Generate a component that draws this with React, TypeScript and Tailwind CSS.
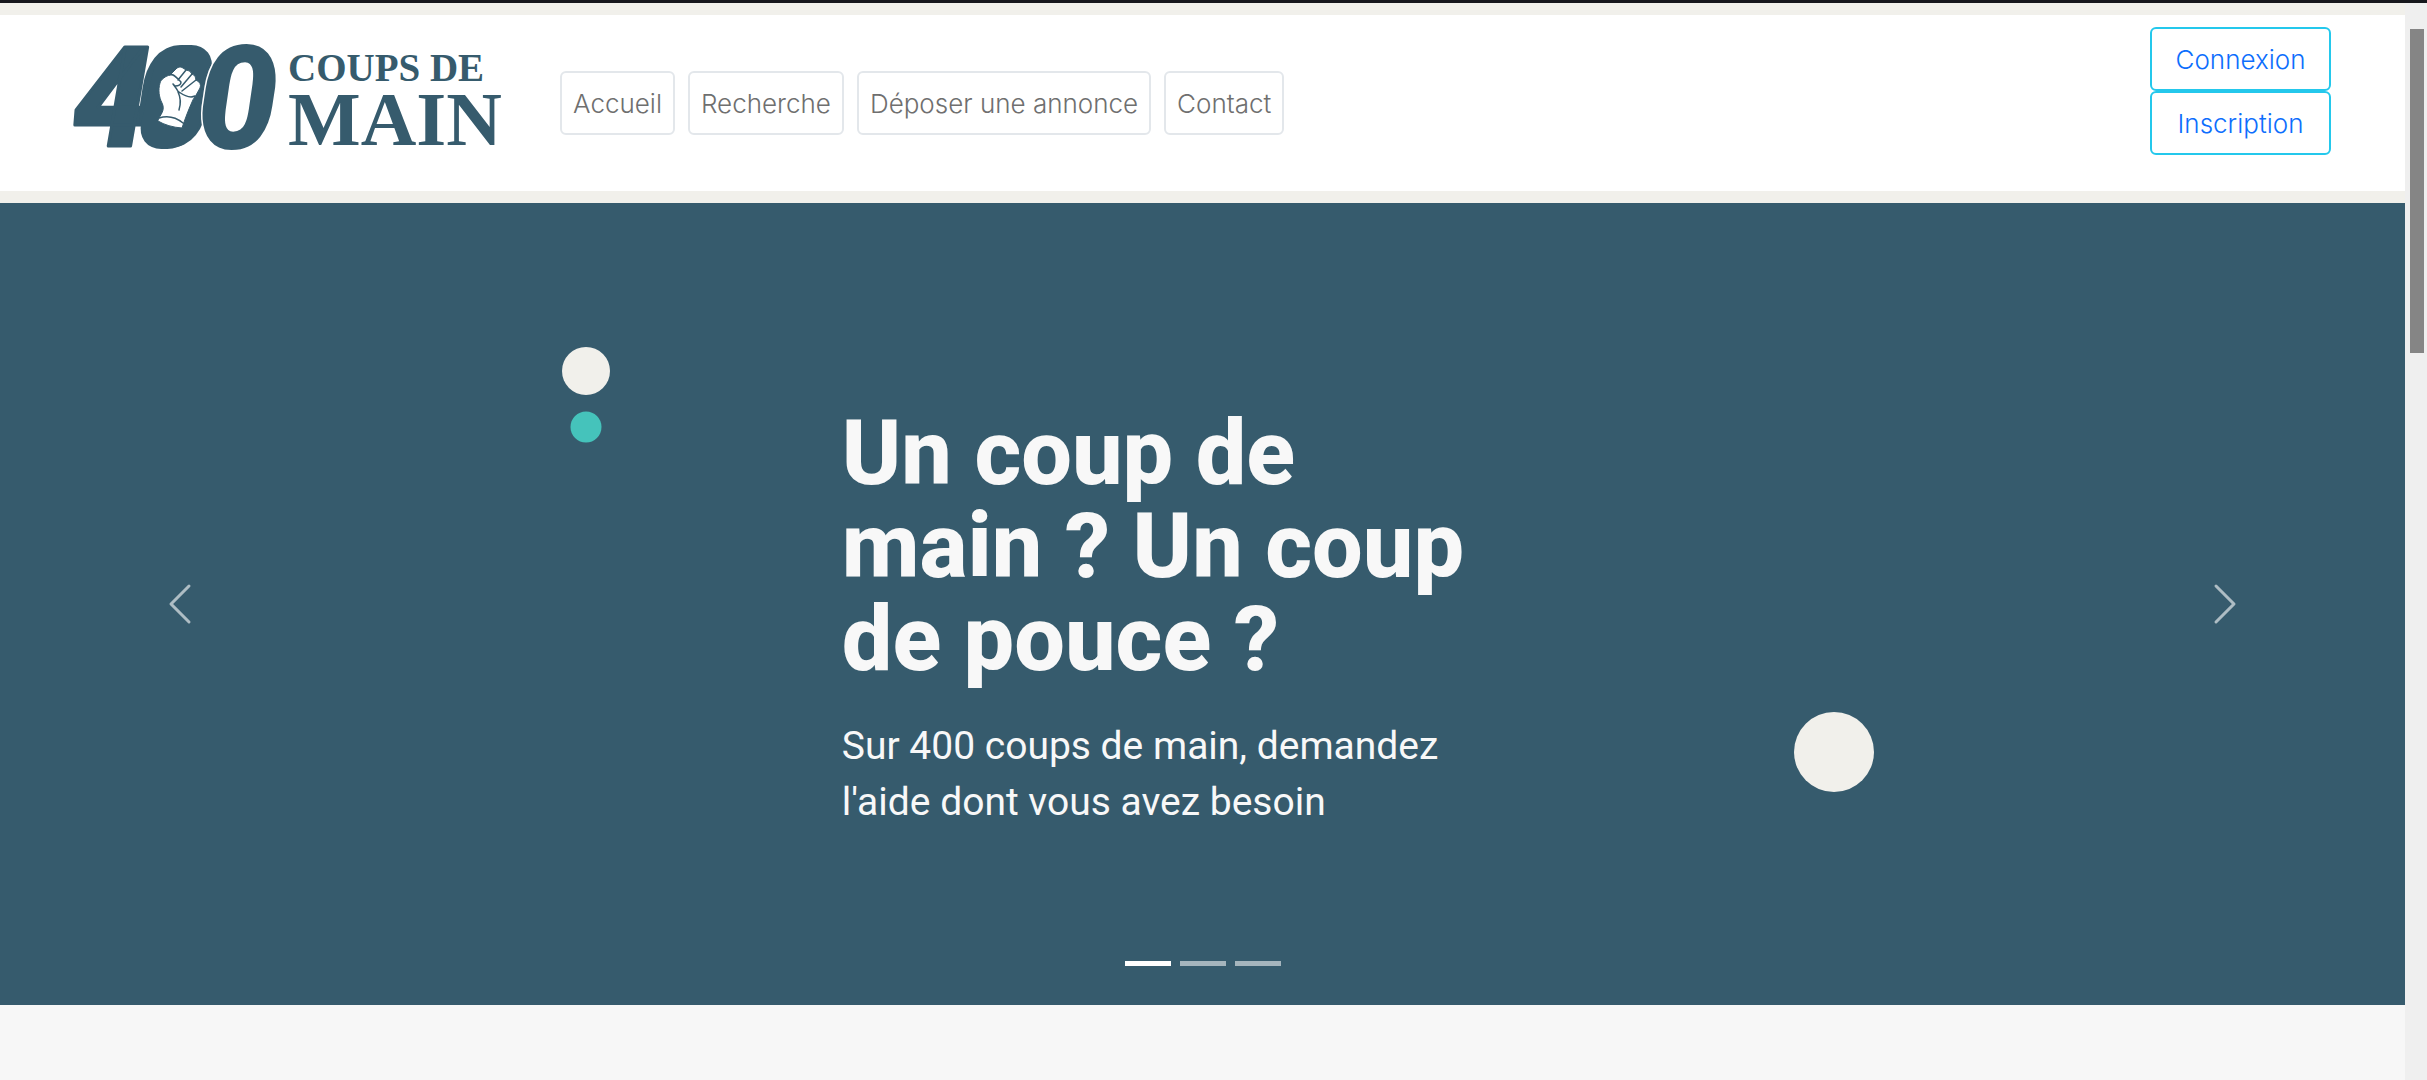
const navLinks = ["Accueil", "Recherche", "Déposer une annonce", "Contact"];
const accountLinks = ["Connexion", "Inscription"];

function Logo() {
  return (
    <svg viewBox="-14 -27 464 176" className="h-[176px] w-[464px]" role="img" aria-label="400 coups de main">
      <g fill="#365b6d" fontFamily="Roboto" fontWeight="900" fontStyle="italic">
        <text x="-1" y="104" fontSize="139" stroke="#365b6d" strokeWidth="3" strokeLinejoin="round">4</text>
        <text x="60" y="105" fontSize="141">0</text>
        <rect x="86" y="3" width="58" height="104" rx="26" transform="skewX(-13)" />
        <text x="123" y="107" fontSize="144" stroke="#ffffff" strokeWidth="3" paintOrder="stroke">0</text>
      </g>
      <g fill="#ffffff" stroke="#365b6d" strokeWidth="1" strokeLinejoin="round" strokeLinecap="round">
        <path d="M85 76 C88 71 91 67 88 61 C85 55 84 48 86 41 C87 37 92 34 96 33 L101 28 Q105 23 109 26 L112 28 Q116 28 118 32 Q122 33 122 38 Q128 41 126 46 L121 55 Q119 57 118 60 C114 69 111 77 108 86 Q94 85 84 79 Z" />
        <path d="M96 33 C99 31 103 36 107 40 Q107 44 101 44 L99 42 M99 42 Q103 47 105 51 M104 38 L112 28 M107 45 L118 32 M108 49 L122 38 M105 50 Q115 57 121 54 M104 50 Q108 58 105 68 M85 76 Q98 72 109 81" fill="none" strokeWidth="1.5" />
      </g>
      <g fill="#365b6d" fontFamily="Liberation Serif" fontWeight="700">
        <text x="214" y="39" fontSize="39">COUPS DE</text>
        <text x="214" y="103" fontSize="77">MAIN</text>
      </g>
    </svg>
  );
}

function Chevron({ path }: { path: string }) {
  return (
    <svg viewBox="0 0 16 16" className="size-12" fill="currentColor" aria-hidden="true">
      <path d={path} />
    </svg>
  );
}

function Header() {
  return (
    <header className="flex items-center border-y-[12px] border-[#f1f0eb] bg-white pr-[74px] pl-[60px]">
      <a href="#accueil" className="shrink-0">
        <Logo />
      </a>
      <nav className="ml-9 flex gap-[13px]">
        {navLinks.map((label) => (
          <a
            key={label}
            href="#"
            className="rounded-md border-2 border-[#e3e7eb] px-[11px] pt-0.5 text-[26px] leading-[58px] font-light whitespace-nowrap text-[#6f6f6f]"
          >
            {label}
          </a>
        ))}
      </nav>
      <div className="ml-auto flex w-[181px] flex-col self-start pt-3">
        {accountLinks.map((label) => (
          <a
            key={label}
            href="#"
            className="rounded-md border-2 border-[#24c8ec] pt-0.5 text-center text-[26px] leading-[60px] font-light text-[#0d6efd] first:leading-[58px] last:leading-[58px]"
          >
            {label}
          </a>
        ))}
      </div>
    </header>
  );
}

function Carousel() {
  return (
    <section className="relative flex aspect-[3/1] flex-col justify-center bg-[#365b6d] pt-[30px] pl-[35%] font-['Roboto',sans-serif] text-[#f8f8f8]">
      <span className="absolute top-[21%] left-[24.35%] size-12 -translate-x-1/2 -translate-y-1/2 rounded-full bg-[#f1f0eb]" />
      <span className="absolute top-[28%] left-[24.35%] size-[31px] -translate-x-1/2 -translate-y-1/2 rounded-full bg-[#45c3bb]" />
      <span className="absolute top-[68.5%] left-[76.25%] size-20 -translate-x-1/2 -translate-y-1/2 rounded-full bg-[#f1f0eb]" />

      <h1 className="text-[90px] leading-[93px] font-extrabold">
        <span className="block">Un coup de</span>
        <span className="block">main ? Un coup</span>
        <span className="block">de pouce ?</span>
      </h1>
      <p className="mt-8 text-[39px] leading-14">
        <span className="block">Sur 400 coups de main, demandez</span>
        <span className="block">l'aide dont vous avez besoin</span>
      </p>

      <button type="button" aria-label="Précédent" className="absolute inset-y-0 left-0 flex w-[15%] items-center justify-center text-white opacity-60">
        <Chevron path="M11.354 1.646a.5.5 0 0 1 0 .708L5.707 8l5.647 5.646a.5.5 0 0 1-.708.708l-6-6a.5.5 0 0 1 0-.708l6-6a.5.5 0 0 1 .708 0z" />
      </button>
      <button type="button" aria-label="Suivant" className="absolute inset-y-0 right-0 flex w-[15%] items-center justify-center text-white opacity-60">
        <Chevron path="M4.646 1.646a.5.5 0 0 1 .708 0l6 6a.5.5 0 0 1 0 .708l-6 6a.5.5 0 0 1-.708-.708L10.293 8 4.646 2.354a.5.5 0 0 1 0-.708z" />
      </button>

      <div className="absolute inset-x-0 bottom-[39px] flex justify-center gap-[9px]">
        <button type="button" aria-label="Diapositive 1" aria-current="true" className="h-[5px] w-[46px] bg-white" />
        <button type="button" aria-label="Diapositive 2" className="h-[5px] w-[46px] bg-white/55" />
        <button type="button" aria-label="Diapositive 3" className="h-[5px] w-[46px] bg-white/55" />
      </div>
    </section>
  );
}

export default function App() {
  return (
    <div className="flex min-h-screen flex-col bg-[#f7f7f7] font-['Inter',sans-serif]">
      <div className="h-[3px] bg-[#16171c]" />
      <div className="flex grow">
        <main className="min-w-0 flex-1">
          <Header />
          <Carousel />
        </main>
        <div className="w-[22px] shrink-0 bg-[#efefef] pt-[26px] pr-[3px] pl-[5px]" aria-hidden="true">
          <div className="h-[324px] bg-[#858585]" />
        </div>
      </div>
    </div>
  );
}
